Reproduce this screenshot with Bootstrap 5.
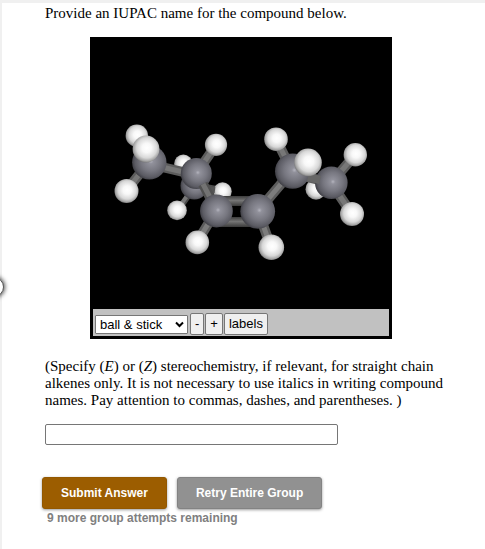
<!DOCTYPE html>
<html lang="en">
<head>
<meta charset="utf-8">
<meta name="viewport" content="width=device-width, initial-scale=1">
<title>IUPAC naming question</title>
<link href="https://cdn.jsdelivr.net/npm/bootstrap@5.3.0/dist/css/bootstrap.min.css" rel="stylesheet">
<style>
  body { font-family: "Liberation Serif", "Times New Roman", serif; font-size: 15px; line-height: 17px; color: #000; }
  .question { min-height: 100vh; border-top: 3px solid #f0f0f0; border-left: 2px solid #f0f0f0; padding: 2px 40px 20px 43px; }
  .panel-handle { position: absolute; left: -16px; top: 277px; width: 20px; height: 20px; border-radius: 50%; background: #fff; border: 1px solid #555; box-shadow: 0 0 4px 1px #555; }
  .viewer { max-width: 302px; margin: 15px 0 19px 45px; border: 3px solid #000; background: #000; }
  .viewer-bar { background: #c1c1c1; padding: 4px 2px 1px; gap: 1px; }
  .viewer-bar select, .viewer-bar button { font-family: "Liberation Sans", Arial, sans-serif; font-size: 13px; line-height: 16px; color: #000; border: 1px solid #767676; border-radius: 2px; }
  .viewer-bar button { background: #efefef; padding: 2px 4px 3px; height: 22px; }
  .viewer-bar select { appearance: none; width: 93px; height: 19px; margin-top: 2px; margin-right: 1px; padding: 0 18px 0 4px; border-radius: 1px; background: #fff; }
  .pick { position: relative; }
  .pick svg { position: absolute; right: 5px; top: 8px; pointer-events: none; }
  .answer { max-width: 293px; height: 21px; border: 1px solid #767676; border-radius: 2px; padding: 1px 2px; margin-top: 15px; }
  .actions { font-family: "Liberation Sans", Arial, sans-serif; font-weight: 700; margin: 32px 0 0 -3px; gap: 10px; }
  .actions .btn { --bs-btn-font-size: 12px; --bs-btn-font-weight: 700; --bs-btn-line-height: 18px; --bs-btn-border-radius: 3px; --bs-btn-color: #fff; --bs-btn-padding-x: 18px; --bs-btn-padding-y: 6px; box-shadow: 0 1px 3px #0006; }
  .btn-submit { --bs-btn-bg: #9c5d00; --bs-btn-border-color: #935800; --bs-btn-hover-bg: #824e00; --bs-btn-hover-color: #fff; }
  .btn-retry { --bs-btn-bg: #919191; --bs-btn-border-color: #838383; --bs-btn-hover-bg: #7c7c7c; --bs-btn-hover-color: #fff; }
  .attempts { font-family: "Liberation Sans", Arial, sans-serif; font-size: 12px; font-weight: 700; color: #808080; margin: 1px 0 0 2px; }
</style>
</head>
<body>
<main class="question">
  <p class="mb-0">Provide an IUPAC name for the compound below.</p>

  <section class="viewer" aria-label="Molecule viewer">
    <svg class="d-block w-100" viewBox="93 40 296 269" role="img" aria-label="Ball and stick model">
      <defs>
        <radialGradient id="c" cx=".55" cy=".47" r=".58">
          <stop offset="0" stop-color="#b4b4be"/><stop offset=".12" stop-color="#91919b"/><stop offset=".5" stop-color="#777780"/><stop offset=".8" stop-color="#5b5b63"/><stop offset="1" stop-color="#36363c"/>
        </radialGradient>
        <radialGradient id="h" cx=".53" cy=".46" r=".58">
          <stop offset="0" stop-color="#fff"/><stop offset=".3" stop-color="#f8f8f8"/><stop offset=".65" stop-color="#d8d8d8"/><stop offset=".85" stop-color="#a4a4a4"/><stop offset="1" stop-color="#606060"/>
        </radialGradient>
        <linearGradient id="b" x1="0" y1="0" x2="0" y2="1">
          <stop offset="0" stop-color="#3c3c3c"/><stop offset=".45" stop-color="#757575"/><stop offset="1" stop-color="#3a3a3a"/>
        </linearGradient>
      </defs>

      <g stroke="#4b4b4b" stroke-width="8">
        <path d="M183 164L194 186L177 210M194 186L222 191"/>
        <path d="M183 164L194 186L177 210M194 186L222 191" stroke="#777" stroke-width="4"/>
      </g>
      <circle cx="183.3" cy="163.8" r="9.2" fill="url(#h)"/>
      <circle cx="222.5" cy="191.5" r="9.2" fill="url(#h)"/>
      <circle cx="194.3" cy="185.8" r="13.8" fill="url(#c)"/>
      <path d="M206 189l9 1" stroke="#555" stroke-width="6"/>
      <circle cx="177" cy="210.4" r="9.8" fill="url(#h)"/>

      <circle cx="136.8" cy="135.7" r="11.2" fill="url(#h)"/>
      <g stroke="#5c5c5c" stroke-width="10">
        <path d="M149 162L126 191M149 164L196 175M196 174L216 145"/>
        <path d="M149 162L126 191M149 164L196 175M196 174L216 145" stroke="#777" stroke-width="5"/>
      </g>
      <circle cx="126.5" cy="191" r="12" fill="url(#h)"/>
      <circle cx="149.3" cy="162.3" r="17.2" fill="url(#c)"/>
      <circle cx="146" cy="149" r="13.4" fill="url(#h)"/>
      <circle cx="216" cy="144.8" r="11.1" fill="url(#h)"/>
      <circle cx="196.3" cy="173.5" r="15.5" fill="url(#c)"/>

      <path d="M203 184L217 211" stroke="#505050" stroke-width="10"/>
      <path d="M203 184L217 211" stroke="#737373" stroke-width="5"/>
      <rect x="216" y="196" width="42" height="10" fill="url(#b)"/>
      <rect x="216" y="217" width="42" height="10" fill="url(#b)"/>
      <g stroke="#5c5c5c" stroke-width="10">
        <path d="M216 211L197 242M258 211L271 247M258 211L292 171"/>
        <path d="M216 211L197 242M258 211L271 247M258 211L292 171" stroke="#7c7c7c" stroke-width="5"/>
      </g>
      <circle cx="197.3" cy="242.4" r="11.8" fill="url(#h)"/>
      <circle cx="216.4" cy="211" r="16.4" fill="url(#c)"/>
      <circle cx="271.3" cy="247.3" r="12.8" fill="url(#h)"/>
      <circle cx="257.7" cy="211.3" r="17.4" fill="url(#c)"/>

      <circle cx="316" cy="189.2" r="10.5" fill="url(#h)"/>
      <g stroke="#5c5c5c" stroke-width="10">
        <path d="M276 139L292 171M307 177L331 183M331 183L355 155M331 183L352 214"/>
        <path d="M276 139L292 171M307 177L331 183M331 183L355 155M331 183L352 214" stroke="#777" stroke-width="5"/>
      </g>
      <circle cx="276" cy="139.2" r="11.8" fill="url(#h)"/>
      <circle cx="355.3" cy="154.8" r="11.7" fill="url(#h)"/>
      <circle cx="331.3" cy="182.7" r="16.3" fill="url(#c)"/>
      <circle cx="352" cy="214" r="12" fill="url(#h)"/>
      <circle cx="292.6" cy="171.2" r="17.6" fill="url(#c)"/>
      <path d="M308 177l12 3" stroke="#666" stroke-width="8"/>
      <circle cx="308" cy="162.4" r="13.8" fill="url(#h)"/>
    </svg>
    <div class="viewer-bar d-flex flex-wrap align-items-start">
      <div class="pick">
        <select class="d-block" aria-label="Display style">
          <option>ball &amp; stick</option>
          <option>wireframe</option>
          <option>spacefill</option>
        </select>
        <svg width="9" height="7" viewBox="0 0 9 7" aria-hidden="true"><path d="M1 1.500L4.500 5L8 1.500" fill="none" stroke="#000" stroke-width="2"/></svg>
      </div>
      <button type="button" aria-label="Zoom out">-</button>
      <button type="button" aria-label="Zoom in">+</button>
      <button type="button">labels</button>
    </div>
  </section>

  <p class="mb-0">(Specify (<i>E</i>) or (<i>Z</i>) stereochemistry, if relevant, for straight chain alkenes only. It is not necessary to use italics in writing compound names. Pay attention to commas, dashes, and parentheses. )</p>

  <input class="answer d-block w-100" type="text" aria-label="IUPAC name">

  <div class="actions d-flex flex-wrap">
    <button type="submit" class="btn btn-submit">Submit Answer</button>
    <button type="button" class="btn btn-retry">Retry Entire Group</button>
  </div>
  <p class="attempts mb-0">9 more group attempts remaining</p>
</main>
<div class="panel-handle"></div>
<script src="https://cdn.jsdelivr.net/npm/bootstrap@5.3.0/dist/js/bootstrap.bundle.min.js"></script>
</body>
</html>
